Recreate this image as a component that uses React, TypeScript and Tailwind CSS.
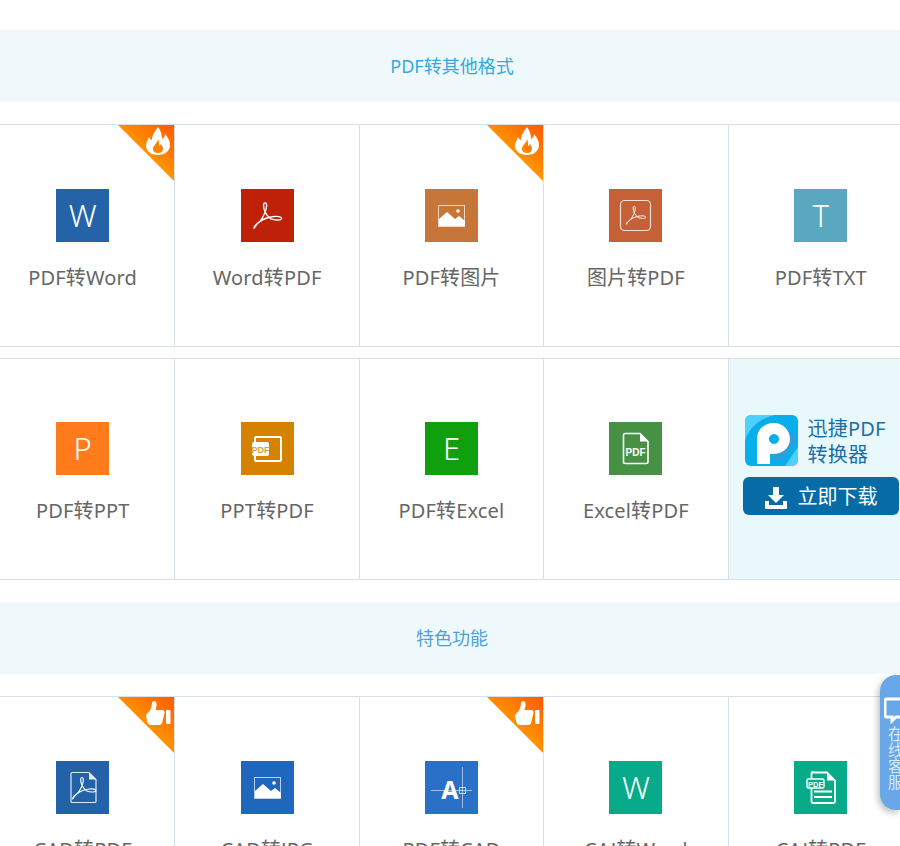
import type { ReactNode } from "react";

const FONT = "font-['Noto_Sans','Noto_Sans_CJK_SC',sans-serif]";

// acrobat swoosh, used on a few of the tiles
const Swoosh = ({ x = 0, y = 0, s = 1 }: { x?: number; y?: number; s?: number }) => (
  <path
    transform={`translate(${x} ${y}) scale(${s})`}
    d="M2 26c-1-2 3-4 6-7 3-4 6-11 6-15 0-3-3-3-3 0 0 5 3 10 7 13 3 1 9 2 10 0 1-2-4-3-9-2-6 1-12 4-15 8-1 1-2 3-2 3z"
    fill="none"
    stroke="#fff"
    strokeWidth="1.300"
    strokeLinejoin="round"
  />
);

const Letter = ({ children }: { children: string }) => (
  <span className="font-['Noto_Sans',sans-serif] text-[31px] leading-none font-light text-white">{children}</span>
);

const ImageGlyph = () => (
  <svg width="53" height="53" viewBox="0 0 53 53">
    <rect x="13.500" y="16.500" width="26" height="21" fill="none" stroke="#fff" strokeOpacity="0.7" />
    <path d="M14 37V30l8-7 8 7 4-3 6 5v5z" fill="#fff" />
    <circle cx="33" cy="22" r="1.800" fill="#fff" />
  </svg>
);

const AcrobatGlyph = () => (
  <svg width="53" height="53" viewBox="0 0 53 53">
    <Swoosh x={11} y={12} s={1.050} />
  </svg>
);

const AcrobatBoxGlyph = () => (
  <svg width="53" height="53" viewBox="0 0 53 53">
    <rect x="11.500" y="11.500" width="30" height="30" rx="4" fill="none" stroke="#fff" strokeOpacity="0.8" strokeWidth="1.200" />
    <Swoosh x={16} y={16} s={0.740} />
  </svg>
);

const PptPdfGlyph = () => (
  <svg width="53" height="53" viewBox="0 0 53 53">
    <rect x="14" y="15" width="26" height="24" rx="1" fill="none" stroke="#fff" strokeWidth="2" />
    <rect x="11" y="20" width="17" height="14" rx="2" fill="#fff" />
    <text x="19.500" y="30.500" textAnchor="middle" fontSize="9" fontWeight="700" fontFamily="Liberation Sans, sans-serif" fill="#e0a040">PDF</text>
  </svg>
);

const FilePdfGlyph = () => (
  <svg width="53" height="53" viewBox="0 0 53 53">
    <path d="M16 11.500h15l8 8v20.500a1.500 1.500 0 0 1-1.500 1.500h-21.500a1.500 1.500 0 0 1-1.500-1.500V13a1.500 1.500 0 0 1 1.500-1.500z" fill="none" stroke="#fff" strokeWidth="1.600" />
    <path d="M31 11.500l8 8h-8z" fill="#fff" />
    <text x="26.500" y="34" textAnchor="middle" fontSize="10" fontWeight="700" fontFamily="Liberation Sans, sans-serif" fill="#fff">PDF</text>
  </svg>
);

const FileAcrobatGlyph = () => (
  <svg width="53" height="53" viewBox="0 0 53 53">
    <path d="M16 11.500h17l7 7v22a1 1 0 0 1-1 1h-23a1 1 0 0 1-1-1v-28a1 1 0 0 1 1-1z" fill="none" stroke="#fff" strokeOpacity="0.85" strokeWidth="1.200" />
    <path d="M33 11.500l7 7h-7z" fill="#fff" fillOpacity="0.85" />
    <Swoosh x={15} y={15} s={0.880} />
  </svg>
);

const CadGlyph = () => (
  <svg width="53" height="53" viewBox="0 0 53 53">
    <path d="M6 29.500h41M37.500 6v41" stroke="#fff" strokeOpacity="0.55" fill="none" />
    <rect x="34.500" y="26.500" width="6" height="6" fill="none" stroke="#fff" strokeOpacity="0.7" />
    <text x="25" y="38" textAnchor="middle" fontSize="25" fontWeight="700" fontFamily="Noto Sans, sans-serif" fill="#fff">A</text>
  </svg>
);

const CajPdfGlyph = () => (
  <svg width="53" height="53" viewBox="0 0 53 53">
    <path d="M19 11.500h14l8 8v21a1.500 1.500 0 0 1-1.500 1.500h-20.500a1.500 1.500 0 0 1-1.500-1.500v-28a1.500 1.500 0 0 1 1.500-1.500z" fill="#07aa89" stroke="#fff" strokeWidth="1.800" />
    <path d="M33 11.500l8 8h-8z" fill="#fff" />
    <rect x="13" y="18" width="17" height="9" rx="1.500" fill="#07aa89" stroke="#fff" strokeWidth="1.400" />
    <text x="21.500" y="25.500" textAnchor="middle" fontSize="7.500" fontWeight="700" fontFamily="Liberation Sans, sans-serif" fill="#fff">PDF</text>
    <path d="M20 30.500h18M20 36h18" stroke="#fff" strokeWidth="2" />
  </svg>
);

const Flame = () => (
  <path
    d="M40 2C43 6 44 10 44 14C46 13 47 11 47 9C50 12 52 16 52 20C52 26 47 30 40 30C33 30 28 26 28 21C28 17 30 15 31 12C32 14 33 15 34 15C34 10 37 6 40 2ZM40 14C40 18 35 20 35 24C35 26.500 37 28 40 28C43 28 45 26.500 45 24C45 22 44 21 43 19C42 20 42 21 41 21C41 18 41 16 40 14Z"
    fill="#fff"
    fillRule="evenodd"
  />
);

const Thumb = () => (
  <g fill="#fff">
    <path d="M36 4C38 4 39 6 38.500 9L37.500 13H44.500C46 13 47 14.500 46.500 16L44 26C43.700 27.300 42.500 28 41 28H33C31 28 30 27 29.500 25.500L28 19C28 17.500 29 16.500 30 16C32 14 34 10 34 6C34 5 35 4 36 4Z" />
    <rect x="48" y="13" width="4.500" height="14" rx="1" />
  </g>
);

// the corner ribbon, the gradient id has to be unique per badge
const Badge = ({ id, kind }: { id: string; kind: "hot" | "good" }) => (
  <svg width="56" height="56" viewBox="0 0 56 56" className="absolute top-0 right-0">
    <defs>
      <linearGradient id={id} x1="0.35" y1="0.75" x2="1" y2="0">
        <stop offset="0" stopColor="#ffa800" />
        <stop offset="1" stopColor="#ff5a00" />
      </linearGradient>
    </defs>
    <polygon points="0,0 56,0 56,56" fill={`url(#${id})`} />
    {kind === "hot" ? <Flame /> : <Thumb />}
  </svg>
);

type Tool = {
  label: string;
  color: string;
  icon: ReactNode;
  badge?: "hot" | "good";
};

const rowOne: Tool[] = [
  { label: "PDF转Word", color: "bg-[#2563a9]", icon: <Letter>W</Letter>, badge: "hot" },
  { label: "Word转PDF", color: "bg-[#bf2008]", icon: <AcrobatGlyph /> },
  { label: "PDF转图片", color: "bg-[#c77639]", icon: <ImageGlyph />, badge: "hot" },
  { label: "图片转PDF", color: "bg-[#c66036]", icon: <AcrobatBoxGlyph /> },
  { label: "PDF转TXT", color: "bg-[#5aa8c0]", icon: <Letter>T</Letter> },
];

const rowTwo: Tool[] = [
  { label: "PDF转PPT", color: "bg-[#ff7b1c]", icon: <Letter>P</Letter> },
  { label: "PPT转PDF", color: "bg-[#d58200]", icon: <PptPdfGlyph /> },
  { label: "PDF转Excel", color: "bg-[#10a00e]", icon: <Letter>E</Letter> },
  { label: "Excel转PDF", color: "bg-[#479144]", icon: <FilePdfGlyph /> },
];

const rowThree: Tool[] = [
  { label: "CAD转PDF", color: "bg-[#2362a8]", icon: <FileAcrobatGlyph />, badge: "good" },
  { label: "CAD转JPG", color: "bg-[#1f67bd]", icon: <ImageGlyph /> },
  { label: "PDF转CAD", color: "bg-[#2970c6]", icon: <CadGlyph />, badge: "good" },
  { label: "CAJ转Word", color: "bg-[#07aa89]", icon: <Letter>W</Letter> },
  { label: "CAJ转PDF", color: "bg-[#07aa89]", icon: <CajPdfGlyph /> },
];

const Cell = ({ tool, id, short }: { tool: Tool; id: string; short?: boolean }) => (
  <div className={`relative flex flex-col items-center border-r border-[#d5e1e6] last:border-r-0 ${short ? "h-[220px] pt-[63px]" : "h-[221px] pt-[64px]"}`}>
    {tool.badge && <Badge id={id} kind={tool.badge} />}
    <div className={`flex h-[53px] w-[53px] items-center justify-center ${tool.color}`}>{tool.icon}</div>
    <div className="mt-[21px] text-[20px] leading-[30px] tracking-[0.15px] text-[#666]">{tool.label}</div>
  </div>
);

const Band = ({ title, tone }: { title: string; tone: string }) => (
  <div className={`flex h-[72px] items-center justify-center bg-[#eff9fb] text-[18px] ${tone}`}>{title}</div>
);

const Promo = () => (
  <div className="flex h-[220px] flex-col bg-[#e9f8fb] pt-[56px] pl-[14px]">
    <div className="flex items-start gap-[10px] pl-[2px]">
      <svg width="53" height="51" viewBox="0 0 53 51">
        <rect width="53" height="51" rx="6" fill="#07aeea" />
        <path d="M0 26C4 12 16 3 30 0H6a6 6 0 0 0-6 6z" fill="#4dd0fb" />
        <path d="M40 51L53 32V45a6 6 0 0 1-6 6z" fill="#4dd0fb" />
        <path d="M45 16l7 8L38 44l-12 0z" fill="#2f9ed8" />
        <path
          d="M12 49V24C12 14 20 8 29 8C38 8 45 15 45 24C45 33 37 39 28 39L25 39V49ZM29 19a5 5 0 1 0 0.010 0Z"
          fill="#fff"
          fillRule="evenodd"
        />
      </svg>
      <div className="pt-[1px] text-[20px] leading-[26px] tracking-[0.2px] text-[#1a6fa8]">
        迅捷PDF
        <br />
        转换器
      </div>
    </div>
    <div className="mt-[9px] flex h-[38px] w-[156px] items-center rounded-[6px] bg-[#076ca6] pl-[22px] text-[20px] text-white">
      <svg width="22" height="22" viewBox="0 0 22 22" className="mt-[3px]">
        <path d="M8 0h6v8h5l-8 8-8-8h5z" fill="#fff" />
        <path d="M0 14h4v4h14v-4h4v7a1 1 0 0 1-1 1H1a1 1 0 0 1-1-1z" fill="#fff" />
      </svg>
      <span className="ml-[11px] pt-[1px]">立即下载</span>
    </div>
  </div>
);

const ChatTab = () => (
  <div className="fixed top-[675px] right-0 h-[135px] w-[20px] overflow-hidden rounded-l-[16px] bg-[#68a8e8] shadow-[-2px_3px_6px_rgba(0,0,0,0.25)]">
    <svg width="20" height="30" viewBox="0 0 20 30" className="absolute top-[22px] left-[4px]">
      <path d="M3 2h17v18H12l-4 4v-4H3a2 2 0 0 1-2-2V4a2 2 0 0 1 2-2z" fill="none" stroke="#fff" strokeWidth="3" />
    </svg>
    <div className="absolute top-[51px] left-[8px] w-[16px] text-[16px] leading-[16px] text-[#d7e8fa]">在线客服</div>
  </div>
);

export default function App() {
  return (
    <div className={`h-[846px] overflow-hidden bg-white ${FONT}`}>
      <div className="ml-[-9px] w-[922px] pt-[30px]">
        <Band title="PDF转其他格式" tone="text-[#35a8e0]" />

        <div className="mt-[22px] grid grid-cols-5 border-y border-[#d5e1e6]">
          {rowOne.map((tool) => (
            <Cell key={tool.label} tool={tool} id={tool.label} />
          ))}
        </div>

        <div className="mt-[11px] grid grid-cols-5 border-y border-[#d5e1e6]">
          {rowTwo.map((tool) => (
            <Cell key={tool.label} tool={tool} id={tool.label} short />
          ))}
          <Promo />
        </div>

        <div className="mt-[22px]">
          <Band title="特色功能" tone="text-[#4aa3df]" />
        </div>

        <div className="mt-[22px] grid grid-cols-5 border-y border-[#d5e1e6]">
          {rowThree.map((tool) => (
            <Cell key={tool.label} tool={tool} id={tool.label} />
          ))}
        </div>
      </div>
      <ChatTab />
    </div>
  );
}
